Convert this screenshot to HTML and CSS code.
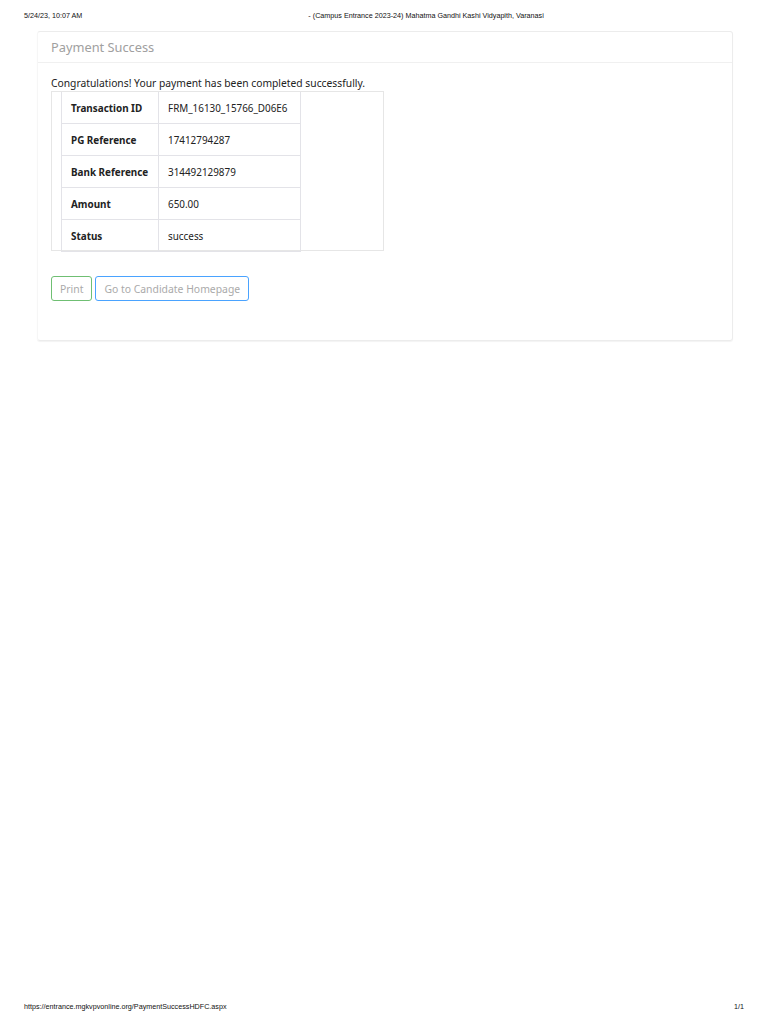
FILE: index.html
```html
<!DOCTYPE html>
<html lang="en">
<head>
    <meta charset="UTF-8">
    <meta name="viewport" content="width=device-width, initial-scale=1.0">
    <title>- (Campus Entrance 2023-24) Mahatma Gandhi Kashi Vidyapith, Varanasi</title>
    <link rel="stylesheet" href="styles.css">
</head>
<body>

<div class="print-head">
    <span class="print-date">5/24/23, 10:07 AM</span>
    <span class="print-title">- (Campus Entrance 2023-24) Mahatma Gandhi Kashi Vidyapith, Varanasi</span>
</div>

<div class="panel">
    <div class="panel-heading">Payment Success</div>
    <div class="panel-body">
        <p class="message">Congratulations! Your payment has been completed successfully.</p>
        <div class="table-box">
            <table class="details">
                <tr>
                    <th>Transaction ID</th>
                    <td>FRM_16130_15766_D06E6</td>
                </tr>
                <tr>
                    <th>PG Reference</th>
                    <td>17412794287</td>
                </tr>
                <tr>
                    <th>Bank Reference</th>
                    <td>314492129879</td>
                </tr>
                <tr>
                    <th>Amount</th>
                    <td>650.00</td>
                </tr>
                <tr>
                    <th>Status</th>
                    <td>success</td>
                </tr>
            </table>
        </div>
        <div class="actions">
            <button class="btn btn-print">Print</button>
            <button class="btn btn-home">Go to Candidate Homepage</button>
        </div>
    </div>
</div>

<div class="print-foot">
    <span>https://entrance.mgkvpvonline.org/PaymentSuccessHDFC.aspx</span>
    <span>1/1</span>
</div>

</body>
</html>
```

FILE: styles.css
```css
body {
    margin: 0;
    min-height: 1024px;
    display: flex;
    flex-direction: column;
    font-family: "Noto Sans", "Open Sans", sans-serif;
    color: #222;
    background: white;
}
.print-head, .print-foot {
    font-family: "Liberation Sans", Arial, sans-serif;
    font-size: 7.2px;
    color: #111;
    display: flex;
    padding: 0 24px;
}
.print-head {
    padding-top: 11px;
    height: 20px;
}
.print-title {
    margin-left: 226px;
}
.print-foot {
    margin-top: auto;
    justify-content: space-between;
    padding-bottom: 13px;
}
.panel {
    margin-left: 37px;
    width: 694px;
    border: 1px solid #ececec;
    border-left-color: #f6f6f6;
    border-radius: 3px;
    box-shadow: 0 1px 1px rgba(0, 0, 0, 0.05);
}
.panel-heading {
    height: 30px;
    line-height: 30px;
    padding-left: 13px;
    font-size: 12.8px;
    color: #a0a0a0;
    border-bottom: 1px solid #f0f0f0;
}
.panel-body {
    padding: 12px 13px 39px;
}
.message {
    margin: 0;
    font-size: 10.3px;
    line-height: 16px;
}
.table-box {
    width: 322px;
    height: 158px;
    padding-left: 9px;
    border: 1px solid #e6e6e6;
}
.details {
    border-collapse: collapse;
    font-size: 9.9px;
    white-space: nowrap;
}
.details th, .details td {
    border: 1px solid #e3e3e8;
    height: 31px;
    padding: 0 9px;
    text-align: left;
}
.details tr:first-child th, .details tr:first-child td {
    border-top: none;
}
.details th {
    width: 78px;
    font-weight: bold;
}
.details td {
    width: 123px;
}
.actions {
    margin-top: 25px;
    display: flex;
    gap: 3px;
}
.btn {
    height: 25px;
    padding: 0 8px;
    font-family: inherit;
    font-size: 10.4px;
    color: #aaa;
    background: white;
    border-radius: 3px;
    border: 1px solid;
}
.btn-print {
    border-color: #6fbf73;
}
.btn-home {
    border-color: #4aa3ff;
}
```
